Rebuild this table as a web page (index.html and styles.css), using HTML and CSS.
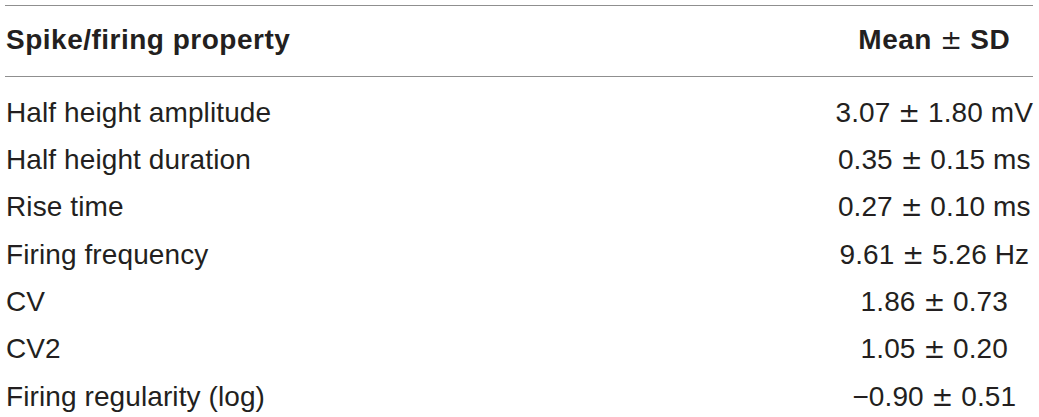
FILE: index.html
```html
<!DOCTYPE html>
<html lang="en">
<head>
    <meta charset="UTF-8">
    <title>Spike/firing properties</title>
    <link rel="stylesheet" href="styles.css">
</head>
<body>
    <table class="stats">
        <thead>
            <tr>
                <th class="label">Spike/firing property</th>
                <th class="value">Mean <span class="pm">±</span> SD</th>
            </tr>
        </thead>
        <tbody>
            <tr><td class="label">Half height amplitude</td><td class="value">3.07 <span class="pm">±</span> 1.80 mV</td></tr>
            <tr><td class="label">Half height duration</td><td class="value">0.35 <span class="pm">±</span> 0.15 ms</td></tr>
            <tr><td class="label">Rise time</td><td class="value">0.27 <span class="pm">±</span> 0.10 ms</td></tr>
            <tr><td class="label">Firing frequency</td><td class="value">9.61 <span class="pm">±</span> 5.26 Hz</td></tr>
            <tr><td class="label">CV</td><td class="value">1.86 <span class="pm">±</span> 0.73</td></tr>
            <tr><td class="label">CV2</td><td class="value">1.05 <span class="pm">±</span> 0.20</td></tr>
            <tr><td class="label">Firing regularity (log)</td><td class="value">−0.90 <span class="pm">±</span> 0.51</td></tr>
        </tbody>
    </table>
</body>
</html>
```

FILE: styles.css
```css
body {
    margin: 0;
    padding: 5px 6px 0 5px;
    background-color: #ffffff;
    font-family: "Liberation Sans", Arial, sans-serif;
    color: #231f20;
}
.stats {
    width: 100%;
    border-collapse: collapse;
    font-size: 28px;
    line-height: 32px;
    letter-spacing: 0.1px;
}
.stats thead th {
    font-weight: bold;
    letter-spacing: 0.5px;
    padding: 18px 0 20px;
    border-top: 1.5px solid #8f8f8f;
    border-bottom: 1.5px solid #8f8f8f;
}
.stats td {
    padding: 7.7px 0;
}
.stats tbody tr:first-child td {
    padding-top: 19.5px;
}
.label {
    text-align: left;
    padding-left: 1px !important;
}
.value {
    text-align: center;
    white-space: nowrap;
    width: 1%;
}
.pm {
    font-family: "DejaVu Sans", sans-serif;
    font-weight: normal;
    font-size: 26px;
    letter-spacing: 0;
}
```
